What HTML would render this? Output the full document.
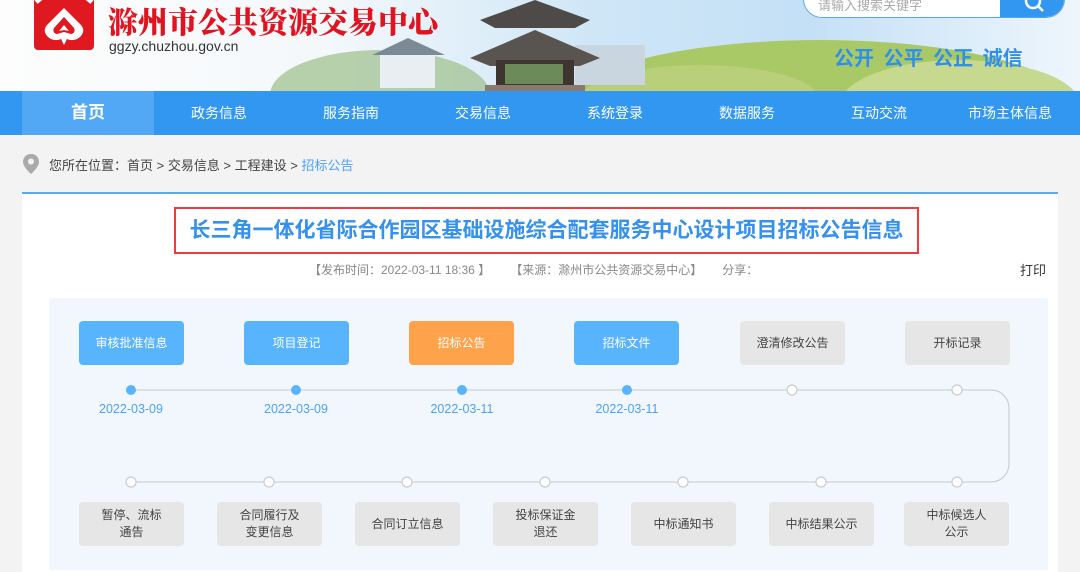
<!DOCTYPE html>
<html><head><meta charset="utf-8"><style>
*{margin:0;padding:0;box-sizing:border-box}
body{width:1080px;height:570px;overflow:hidden;background:#f3f3f3;font-family:"Liberation Sans","Noto Sans CJK SC",sans-serif;position:relative}
.abs{position:absolute}
#hdr{left:0;top:0;width:1080px;height:91px;background:linear-gradient(90deg,#fdfdfd 0%,#f4f8fb 30%,#cfe6f7 55%,#c4e0f6 75%,#eef6fc 100%);overflow:hidden}
.nav{left:0;top:91px;width:1080px;height:44px;background:#3197f1}
.nav div{position:absolute;top:0;height:44px;line-height:44px;color:#fff;font-size:14px;text-align:center;width:132px}
.nav .act{background:#52a8f4;font-size:17px;font-weight:bold}
.box{position:absolute;width:105px;height:44px;border-radius:4px;font-size:12px;display:flex;align-items:center;justify-content:center;text-align:center;line-height:17px;color:#444;background:#e6e6e6}
.blue{background:#58b4fd;color:#fff}
.orange{background:#ffa24c;color:#fff}
.date{position:absolute;top:402px;font-size:12.5px;color:#4da2f5;width:100px;text-align:center}
</style></head><body>
<div id="hdr" class="abs">
<svg class="abs" style="left:0;top:0" width="1080" height="91">
<ellipse cx="380" cy="95" rx="110" ry="45" fill="#9cbf8a" opacity=".7"/>
<ellipse cx="820" cy="110" rx="260" ry="70" fill="#a9c866"/>
<ellipse cx="700" cy="100" rx="120" ry="35" fill="#b9cf79"/>
<ellipse cx="960" cy="105" rx="120" ry="45" fill="#c7d98e"/>
<rect x="380" y="50" width="55" height="38" fill="#e8eef2"/>
<polygon points="372,55 408,38 445,55" fill="#7c8a96"/>
<rect x="575" y="45" width="70" height="40" fill="#c9d5df"/>
<polygon points="480,20 535,0 590,20 575,28 495,28" fill="#4d4a48"/>
<polygon points="470,58 535,30 600,58 580,66 490,66" fill="#5a5450"/>
<rect x="496" y="60" width="78" height="28" fill="#3e3530"/>
<rect x="505" y="64" width="58" height="20" fill="#6d8a5a"/>
<rect x="485" y="85" width="100" height="6" fill="#8a7a70"/>
</svg>
<svg class="abs" style="left:34px;top:0" width="60" height="51" viewBox="0 0 60 51">
<rect x="0" y="-6" width="60" height="56" rx="4" fill="#e0181f"/>
<path d="M2 2 L14 -8 M58 2 L46 -8" stroke="#fff" stroke-width="5"/>
<path d="M30 8 L47 25 Q52 31 46 37 Q40 42 33 39 L30 45 L27 39 Q20 42 14 37 Q8 31 13 25Z" fill="#fff"/>
<path d="M30 17 L40 28 Q42 33 37 34 L30 32 L23 34 Q18 33 20 28Z" fill="#e0181f"/>
<path d="M30 25 L35 31 L30 30 L25 31Z" fill="#fff"/>
</svg>
<div class="abs" style="left:108px;top:0px;font-family:'Noto Serif CJK SC',serif;font-weight:900;font-size:30px;color:#e01420;line-height:40px;white-space:nowrap">滁州市公共资源交易中心</div>
<div class="abs" style="left:109px;top:38px;font-size:14px;color:#333">ggzy.chuzhou.gov.cn</div>
<div class="abs" style="left:803px;top:-20px;width:262px;height:38px;border:1px solid #5aa6ee;border-radius:19px;background:#fff;overflow:hidden">
<div class="abs" style="left:14px;top:14px;font-size:13px;color:#aaa">请输入搜索关键字</div>
<div class="abs" style="left:196px;top:0;width:66px;height:38px;background:#3197f1"></div>
<svg class="abs" style="left:218px;top:10px" width="24" height="24"><circle cx="11" cy="10" r="7" stroke="#fff" stroke-width="2.5" fill="none"/><line x1="16" y1="15" x2="21" y2="20" stroke="#fff" stroke-width="2.5"/></svg>
</div>
<div class="abs" style="left:834px;top:42px;font-size:20px;font-weight:bold;color:#2f8fea;white-space:nowrap;word-spacing:4px">公开 公平 公正 诚信</div>
</div>
<div class="nav abs">
<div class="act" style="left:22px">首页</div>
<div style="left:153px">政务信息</div>
<div style="left:285px">服务指南</div>
<div style="left:417px">交易信息</div>
<div style="left:549px">系统登录</div>
<div style="left:681px">数据服务</div>
<div style="left:813px">互动交流</div>
<div style="left:944px">市场主体信息</div>
</div>
<svg class="abs" style="left:22px;top:153px" width="18" height="22"><path d="M9 1 C4 1 1 4.5 1 9 C1 14 9 21 9 21 C9 21 17 14 17 9 C17 4.5 14 1 9 1Z" fill="#aaa"/><circle cx="9" cy="8.5" r="3" fill="#f3f3f3"/></svg>
<div class="abs" style="left:49px;top:155px;font-size:13px;color:#444;white-space:nowrap">您所在位置：首页 &gt; 交易信息 &gt; 工程建设 &gt; <span style="color:#4da2f5">招标公告</span></div>
<div class="abs" style="left:22px;top:192px;width:1036px;height:380px;background:#fff;border-top:2px solid #5aa9f2"></div>
<div class="abs" style="left:174px;top:207px;width:745px;height:47px;border:2px solid #f23a3a"></div>
<div class="abs" style="left:174px;top:207px;width:745px;height:47px;line-height:47px;text-align:center;font-size:21px;font-weight:bold;color:#3591ee;white-space:nowrap">长三角一体化省际合作园区基础设施综合配套服务中心设计项目招标公告信息</div>
<div class="abs" style="left:309px;top:261px;font-size:12px;color:#888;white-space:nowrap">【发布时间：2022-03-11 18:36 】&nbsp;&nbsp;&nbsp;&nbsp;&nbsp; 【来源：滁州市公共资源交易中心】&nbsp;&nbsp;&nbsp;&nbsp;&nbsp; 分享：</div>
<div class="abs" style="left:1020px;top:260px;font-size:13px;color:#333">打印</div>
<div class="abs" style="left:49px;top:298px;width:999px;height:272px;background:#f2f7fe"></div>
<svg class="abs" style="left:0;top:0" width="1080" height="570">
<path d="M131 390 H991 A18 18 0 0 1 1009 408 V464 A18 18 0 0 1 991 482 H131" stroke="#c4c8cc" stroke-width="1" fill="none"/>
<g fill="#58b4fd"><circle cx="131" cy="390" r="5"/><circle cx="296" cy="390" r="5"/><circle cx="462" cy="390" r="5"/><circle cx="627" cy="390" r="5"/></g>
<g fill="#fff" stroke="#c8ccd0" stroke-width="1.2"><circle cx="792" cy="390" r="5"/><circle cx="957" cy="390" r="5"/>
<circle cx="131" cy="482" r="5"/><circle cx="269" cy="482" r="5"/><circle cx="407" cy="482" r="5"/><circle cx="545" cy="482" r="5"/><circle cx="683" cy="482" r="5"/><circle cx="821" cy="482" r="5"/><circle cx="957" cy="482" r="5"/></g>
</svg>
<div class="box blue" style="left:79px;top:321px">审核批准信息</div>
<div class="box blue" style="left:244px;top:321px">项目登记</div>
<div class="box orange" style="left:409px;top:321px">招标公告</div>
<div class="box blue" style="left:574px;top:321px">招标文件</div>
<div class="box" style="left:740px;top:321px">澄清修改公告</div>
<div class="box" style="left:905px;top:321px">开标记录</div>
<div class="date" style="left:81px">2022-03-09</div>
<div class="date" style="left:246px">2022-03-09</div>
<div class="date" style="left:412px">2022-03-11</div>
<div class="date" style="left:577px">2022-03-11</div>
<div class="box" style="left:79px;top:502px">暂停、流标<br>通告</div>
<div class="box" style="left:217px;top:502px">合同履行及<br>变更信息</div>
<div class="box" style="left:355px;top:502px">合同订立信息</div>
<div class="box" style="left:493px;top:502px">投标保证金<br>退还</div>
<div class="box" style="left:631px;top:502px">中标通知书</div>
<div class="box" style="left:769px;top:502px">中标结果公示</div>
<div class="box" style="left:904px;top:502px">中标候选人<br>公示</div>
</body></html>
